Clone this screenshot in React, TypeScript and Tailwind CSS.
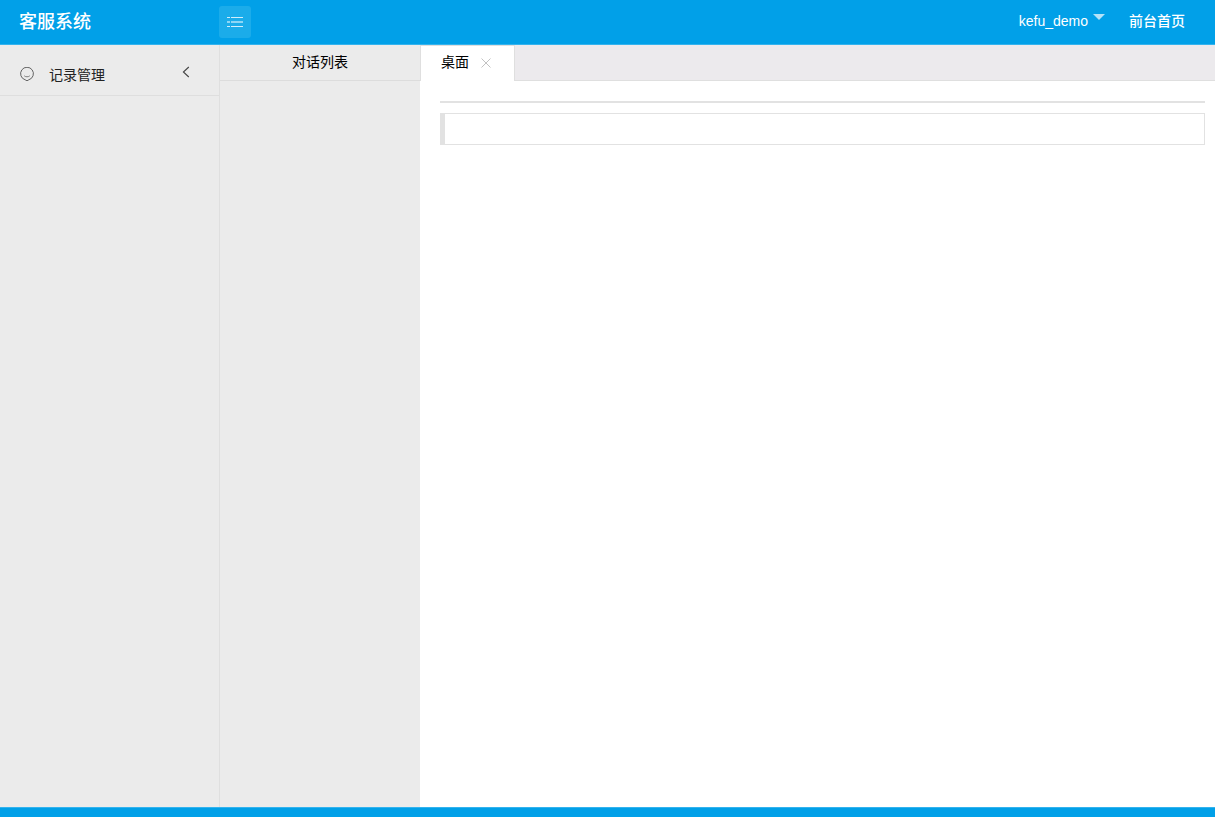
import * as React from 'react';

interface Tab {
  id: string;
  title: string;
}

const TABS: Tab[] = [{ id: 'desktop', title: '桌面' }];

const ListIcon = () => (
  <svg width="16" height="12" viewBox="0 0 16 12" shapeRendering="crispEdges" aria-hidden="true">
    <g fill="#fff">
      <path d="M0 1h3v1H0zM4 1h12v1H4zM0 10h3v1H0zM4 10h12v1H4z" opacity="0.8" />
      <path d="M0 5h3v2H0zM4 5h12v2H4z" opacity="0.5" />
    </g>
  </svg>
);

const FaceIcon = () => (
  <svg width="14" height="14" viewBox="0 0 14 14" fill="none" stroke="#555" aria-hidden="true">
    <path d="M5.2 12.8A6.4 6.4 0 1 1 8.8 12.8L7 13.8z" strokeWidth="0.9" strokeLinejoin="round" />
    <path d="M4.2 8.8c1.4 1.3 4.2 1.3 5.6 0" strokeWidth="0.7" />
  </svg>
);

const ChevronIcon = () => (
  <svg width="8" height="12" viewBox="0 0 8 12" fill="none" stroke="#444" aria-hidden="true">
    <path d="M6.8 1L1.4 6l5.4 5" strokeWidth="1.1" />
  </svg>
);

const CloseIcon = () => (
  <svg width="10" height="10" viewBox="0 0 10 10" fill="none" stroke="#c2c2c2" aria-hidden="true">
    <path d="M0.5 0.5l9 9M9.5 0.5l-9 9" />
  </svg>
);

/** Top bar with the system name, menu toggle and account links */
const Header: React.FC<{ onToggle: () => void }> = ({ onToggle }) => (
  <header className="flex h-[45px] shrink-0 border-b border-[#33b3ee] bg-[#01a0e8] text-white">
    <a href="#" className="w-[219px] pl-[19px] text-lg leading-[44px] font-medium">
      客服系统
    </a>
    <button
      type="button"
      onClick={onToggle}
      aria-label="切换菜单"
      className="mt-[6px] flex size-8 items-center justify-center rounded-[3px] bg-[#1bacea]"
    >
      <ListIcon />
    </button>
    <nav className="ml-auto flex gap-6 pr-[30px] text-sm leading-[43px] font-medium">
      <a href="#" className="flex gap-[5px]">
        kefu_demo
        <svg className="mt-[14px]" width="12" height="6" viewBox="0 0 12 6" aria-hidden="true">
          <path d="M0 0h12L6 6z" fill="#b3e2f8" />
        </svg>
      </a>
      <a href="#">前台首页</a>
    </nav>
  </header>
);

/** Left navigation */
const Sidebar: React.FC = () => (
  <aside className="w-[220px] shrink-0 border-r border-[#dfdfdf] bg-[#ebebeb]">
    <a
      href="#"
      className="flex h-[51px] items-center border-b border-[#dedede] pt-[8px] pr-[29px] pl-5 text-sm text-[#222]"
    >
      <FaceIcon />
      <span className="ml-[15px] pt-[2px]">记录管理</span>
      <span className="ml-auto pb-1">
        <ChevronIcon />
      </span>
    </a>
  </aside>
);

/** Conversation list column */
const DialogList: React.FC = () => (
  <section className="w-[200px] shrink-0 bg-[#ebebeb]">
    <h2 className="h-9 border-b border-[#dcdcdc] text-center text-sm leading-[34px] text-black">
      对话列表
    </h2>
  </section>
);

export default function App() {
  const [tabs, setTabs] = React.useState(TABS);
  const [menuOpen, setMenuOpen] = React.useState(true);

  const closeTab = (id: string) => setTabs(tabs.filter((tab) => tab.id !== id));

  return (
    <div className="flex h-screen flex-col bg-white font-['Liberation_Sans','Noto_Sans_CJK_SC',sans-serif]">
      <Header onToggle={() => setMenuOpen(!menuOpen)} />
      <div className="flex min-h-0 flex-1">
        {menuOpen && <Sidebar />}
        <DialogList />
        <main className="min-w-0 flex-1">
          <div className="flex h-9 border-b border-[#dfdfdf] bg-[#eceaed]">
            {tabs.map((tab) => (
              <div
                key={tab.id}
                className="flex h-9 items-center border border-b-0 border-[#dfdfdf] bg-white pr-[23px] pb-[2px] pl-5 text-sm text-black"
              >
                <button type="button" className="pb-[2px]">
                  {tab.title}
                </button>
                <button
                  type="button"
                  onClick={() => closeTab(tab.id)}
                  aria-label="关闭"
                  className="ml-3"
                >
                  <CloseIcon />
                </button>
              </div>
            ))}
          </div>
          <div className="pt-5 pr-[10px] pl-5">
            <hr className="border-t-2 border-[#e2e2e2]" />
            <blockquote className="mt-[10px] h-8 border border-l-[5px] border-[#e2e2e2]" />
          </div>
        </main>
      </div>
      <footer className="h-[10px] shrink-0 border-t border-[#33b3ee] bg-[#01a0e8]" />
    </div>
  );
}
